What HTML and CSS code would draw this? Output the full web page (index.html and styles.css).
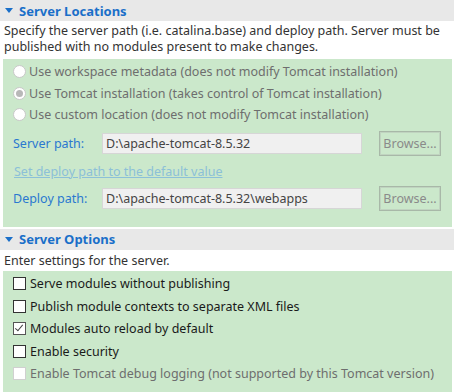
FILE: index.html
```html
<!DOCTYPE html>
<html lang="en">
<head>
    <meta charset="UTF-8">
    <title>Tomcat Server Overview</title>
    <link rel="stylesheet" href="styles.css">
</head>
<body>
    <section class="section">
        <div class="section-head">
            <span class="twisty"></span>
            <h2>Server Locations</h2>
        </div>
        <p class="section-desc">Specify the server path (i.e. catalina.base) and deploy path. Server must be published with no modules present to make changes.</p>
        <div class="section-body locations">
            <label class="option disabled"><span class="radio"></span>Use workspace metadata (does not modify Tomcat installation)</label>
            <label class="option disabled"><span class="radio checked"></span>Use Tomcat installation (takes control of Tomcat installation)</label>
            <label class="option disabled"><span class="radio"></span>Use custom location (does not modify Tomcat installation)</label>

            <div class="path-row">
                <span class="path-label">Server path:</span>
                <span class="path-input">D:\apache-tomcat-8.5.32</span>
                <span class="browse">Browse...</span>
            </div>
            <a class="default-link">Set deploy path to the default value</a>
            <div class="path-row">
                <span class="path-label">Deploy path:</span>
                <span class="path-input">D:\apache-tomcat-8.5.32\webapps</span>
                <span class="browse">Browse...</span>
            </div>
        </div>
    </section>

    <section class="section">
        <div class="section-head">
            <span class="twisty"></span>
            <h2>Server Options</h2>
        </div>
        <p class="section-desc single">Enter settings for the server.</p>
        <div class="section-body options">
            <label class="option"><span class="check"></span>Serve modules without publishing</label>
            <label class="option"><span class="check"></span>Publish module contexts to separate XML files</label>
            <label class="option"><span class="check checked"></span>Modules auto reload by default</label>
            <label class="option"><span class="check"></span>Enable security</label>
            <label class="option disabled"><span class="check"></span>Enable Tomcat debug logging (not supported by this Tomcat version)</label>
        </div>
    </section>
</body>
</html>
```

FILE: styles.css
```css
:root {
    --green: #cbe8cb;
    --head-gray: #e8e8e8;
    --title-blue: #1a6fc9;
    --label-blue: #2a78d0;
    --text: #333333;
}

body {
    margin: 0;
    font-family: 'Noto Sans', 'Open Sans', sans-serif;
    font-size: 12.5px;
    color: var(--text);
    background: #ffffff;
    overflow: hidden;
}

.section-head {
    display: flex;
    align-items: center;
    height: 21px;
    background-color: var(--head-gray);
    padding-left: 5px;
}

.twisty {
    width: 0;
    height: 0;
    border-left: 4px solid transparent;
    border-right: 4px solid transparent;
    border-top: 5px solid var(--title-blue);
    margin-right: 6px;
}

h2 {
    margin: 0;
    font-size: 13px;
    font-weight: bold;
    color: var(--title-blue);
}

.section-desc {
    margin: 0;
    padding: 2px 4px 4px;
    line-height: 16px;
    height: 32px;
}

.section-desc.single {
    height: 16px;
    padding: 3px 4px 2px;
}

.section-body {
    background-color: var(--green);
    margin: 0 2px 0 3px;
    padding: 2px 0 0 10px;
}

.locations {
    padding-bottom: 16px;
    margin-bottom: 2px;
}

.options {
    padding-top: 2px;
    height: 200px;
}

.option {
    display: flex;
    align-items: center;
    height: 21.5px;
    color: #1a1a1a;
}

.options .option {
    height: 22.5px;
}

.option.disabled {
    color: #6e6e6e;
}

.radio {
    width: 11px;
    height: 11px;
    border: 1px solid #c8c8c8;
    border-radius: 50%;
    background: #ffffff;
    margin-right: 3px;
    display: flex;
    align-items: center;
    justify-content: center;
}

.radio.checked::after {
    content: '';
    width: 7px;
    height: 7px;
    border-radius: 50%;
    background: #b8b8b8;
}

.check {
    width: 11px;
    height: 11px;
    border: 1px solid #333333;
    background: #ffffff;
    margin-right: 4px;
    position: relative;
}

.option.disabled .check {
    border-color: #d0d0d0;
}

.check.checked {
    border-color: #555555;
}

.check.checked::after {
    content: '';
    position: absolute;
    left: 3px;
    top: 0;
    width: 3px;
    height: 7px;
    border-right: 1px solid #444;
    border-bottom: 1px solid #444;
    transform: rotate(40deg);
}

.path-row {
    display: flex;
    align-items: center;
    height: 25px;
    margin-top: 5px;
}

.path-row + .default-link + .path-row {
    margin-top: 4px;
}

.path-label {
    width: 89px;
    color: var(--label-blue);
}

.path-input {
    box-sizing: border-box;
    width: 260px;
    height: 21px;
    line-height: 19px;
    padding-left: 3px;
    background: #f0f0f0;
    border: 1px solid #d6d6d6;
    color: #444444;
}

.browse {
    box-sizing: border-box;
    margin-left: 17px;
    width: 62px;
    height: 25px;
    line-height: 21px;
    text-align: center;
    border: 2px solid #c0d4c0;
    outline: 1px solid #a8b8a8;
    outline-offset: -1px;
    color: #8a8a8a;
}

.default-link {
    display: block;
    color: #8cc0d8;
    text-decoration: underline;
    height: 21px;
    line-height: 21px;
    margin-top: 5px;
    margin-left: 1px;
}
```
